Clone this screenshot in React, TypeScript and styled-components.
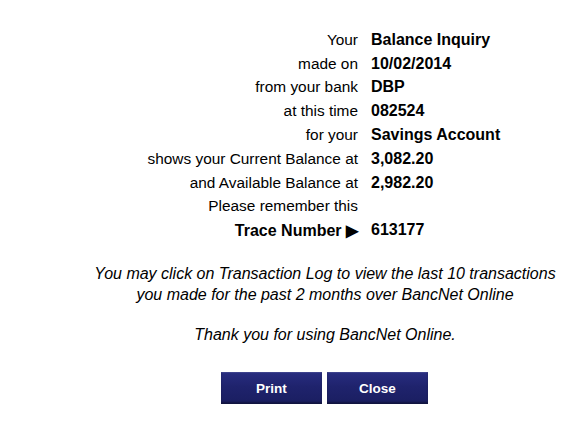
import React from "react";
import styled, { createGlobalStyle } from "styled-components";

const Global = createGlobalStyle`
  html, body { margin: 0; padding: 0; background: #ffffff; }
  body { font-family: "Liberation Sans", Arial, sans-serif; color: #000; overflow: hidden; }
`;

const Page = styled.div`
  width: 583px;
  height: 431px;
  box-sizing: border-box;
  padding: 28px 0 0 67px;
`;

const Details = styled.div`
  display: grid;
  grid-template-columns: 291px auto;
  column-gap: 13px;
  grid-auto-rows: 23.8px;
  align-items: center;
`;

const Label = styled.div<{ $strong?: boolean }>`
  text-align: right;
  white-space: nowrap;
  font-weight: ${(p) => (p.$strong ? 700 : 400)};
  font-size: ${(p) => (p.$strong ? "16px" : "15.4px")};
`;

const Value = styled.div`
  font-weight: 700;
  font-size: 16px;
  white-space: nowrap;
`;

const Note = styled.p`
  margin: 21px 0 0;
  text-align: center;
  font-style: italic;
  font-size: 16px;
  line-height: 21px;
`;

const Thanks = styled.p`
  margin: 19px 0 0;
  text-align: center;
  font-style: italic;
  font-size: 16px;
  line-height: 21px;
`;

const Buttons = styled.div`
  display: flex;
  justify-content: center;
  gap: 5px;
  margin-top: 27px;
  padding-right: 1px;
`;

const Button = styled.button`
  width: 101px;
  height: 32px;
  border: none;
  padding: 0;
  color: #ffffff;
  font-family: "Liberation Sans", Arial, sans-serif;
  font-weight: 700;
  font-size: 13.5px;
  background: linear-gradient(#282d80 0%, #1f236d 45%, #1a1e60 100%);
  box-shadow: inset 0 -2px 2px rgba(0, 0, 0, 0.35), inset 0 1px 1px rgba(255, 255, 255, 0.12);
  cursor: pointer;
`;

const rows: [string, string, boolean?][] = [
  ["Your", "Balance Inquiry"],
  ["made on", "10/02/2014"],
  ["from your bank", "DBP"],
  ["at this time", "082524"],
  ["for your", "Savings Account"],
  ["shows your Current Balance at", "3,082.20"],
  ["and Available Balance at", "2,982.20"],
  ["Please remember this", ""],
  ["Trace Number \u25B6", "613177", true],
];

export default function App() {
  return (
    <>
      <Global />
      <Page>
        <Details>
          {rows.map(([l, v, s]) => (
            <React.Fragment key={l}>
              <Label $strong={s}>{l}</Label>
              <Value>{v}</Value>
            </React.Fragment>
          ))}
        </Details>
        <Note>
          You may click on Transaction Log to view the last 10 transactions
          <br />
          you made for the past 2 months over BancNet Online
        </Note>
        <Thanks>Thank you for using BancNet Online.</Thanks>
        <Buttons>
          <Button>Print</Button>
          <Button>Close</Button>
        </Buttons>
      </Page>
    </>
  );
}
